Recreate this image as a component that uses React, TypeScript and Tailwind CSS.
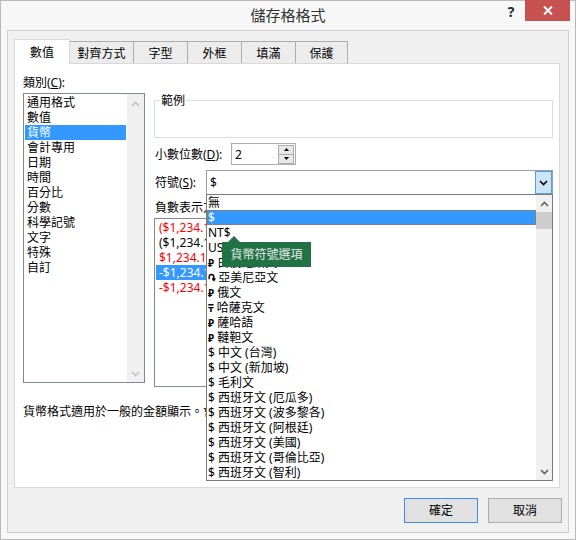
import React from 'react';

const categories = ['通用格式', '數值', '貨幣', '會計專用', '日期', '時間', '百分比', '分數', '科學記號', '文字', '特殊', '自訂'];

const negatives = [
  { text: '($1,234.10)', red: true },
  { text: '($1,234.10)', red: false },
  { text: '$1,234.10', red: true },
  { text: '-$1,234.10', red: false, selected: true },
  { text: '-$1,234.10', red: true },
];

// [symbol, language, symbol drawn small]
const symbols: [string, string, boolean][] = [
  ['', '無', false],
  ['$', '', false],
  ['NT$', '', false],
  ['US$', '', false],
  ['₽', '白俄羅斯文', true],
  ['֏', '亞美尼亞文', true],
  ['₽', '俄文', true],
  ['₸', '哈薩克文', true],
  ['₽', '薩哈語', true],
  ['₽', '韃靼文', true],
  ['$', '中文 (台灣)', false],
  ['$', '中文 (新加坡)', false],
  ['$', '毛利文', false],
  ['$', '西班牙文 (厄瓜多)', false],
  ['$', '西班牙文 (波多黎各)', false],
  ['$', '西班牙文 (阿根廷)', false],
  ['$', '西班牙文 (美國)', false],
  ['$', '西班牙文 (哥倫比亞)', false],
  ['$', '西班牙文 (智利)', false],
];

const tabs = [
  { label: '數值', w: 'w-[56px]' },
  { label: '對齊方式', w: 'w-[65px]' },
  { label: '字型', w: 'w-[55px]' },
  { label: '外框', w: 'w-[55px]' },
  { label: '填滿', w: 'w-[55px]' },
  { label: '保護', w: 'w-[53px]' },
];

function Chevron({ up, className }: { up?: boolean; className?: string }) {
  return (
    <svg width="9" height="6" viewBox="0 0 9 6" className={className}>
      <path d={up ? 'M1 5L4.5 1.5L8 5' : 'M1 1L4.5 4.5L8 1'} fill="none" stroke="currentColor" strokeWidth="1.6" />
    </svg>
  );
}

function Tri({ up }: { up?: boolean }) {
  return (
    <svg width="5" height="3" viewBox="0 0 5 3">
      <path d={up ? 'M0 3L2.5 0L5 3Z' : 'M0 0L2.5 3L5 0Z'} fill="#000" />
    </svg>
  );
}

export default function App() {
  return (
    <div className="w-[576px] h-[540px] bg-[#f7f7f7] border border-[#bababa] flex flex-col text-[12px] leading-[15px] text-black font-[family-name:'Noto_Sans','DejaVu_Sans','Noto_Sans_CJK_TC',sans-serif]">
      {/* Title bar */}
      <div className="h-[29px] grid grid-cols-[1fr_auto_1fr] shrink-0">
        <div />
        <div className="self-center text-[15px] text-[#333] pb-px">儲存格格式</div>
        <div className="flex justify-end items-start">
          <div className="w-[28px] h-[20px] flex items-center justify-center font-bold text-[14px] text-[#2b2b2b]">?</div>
          <div className="w-[45px] h-[21px] -mt-px mr-[5px] bg-[#c75050] flex items-center justify-center">
            <svg width="10" height="9" viewBox="0 0 10 9">
              <path d="M1 0.5L9 8.5M9 0.5L1 8.5" stroke="#fff" strokeWidth="2" />
            </svg>
          </div>
        </div>
      </div>

      {/* Client frame */}
      <div className="mx-[6px] h-[503px] border border-[#cdcdcd] bg-[#f0f0f0] flex flex-col">
        {/* Tabs */}
        <div className="flex items-end pt-[8px] pl-[6px]">
          {tabs.map((t, i) =>
            i === 0 ? (
              <div key={t.label} className={`${t.w} h-[25px] -mb-px relative z-10 bg-white border border-b-0 border-[#d9d9d9] flex items-center justify-center pt-px`}>
                {t.label}
              </div>
            ) : (
              <div key={t.label} className={`${t.w} h-[22px] -ml-px bg-[#ececec] border border-b-0 border-[#acacac] flex items-center justify-center pt-px`}>
                {t.label}
              </div>
            )
          )}
        </div>

        {/* Tab page */}
        <div className="ml-[6px] mr-[8px] h-[425px] bg-white border border-[#d9d9d9] flex flex-col">
          <div className="flex">
            {/* Category */}
            <div className="pl-[8px] pt-[11px] flex flex-col">
              <div className="h-[15px] mb-[3px]">
                類別(<u>C</u>):
              </div>
              <div className="w-[122px] h-[290px] border border-[#828790] flex">
                <div className="flex-1 p-px">
                  {categories.map((c, i) => (
                    <div key={c} className={`h-[15px] pl-[2px] ${i === 2 ? 'bg-[#3399ff] text-white' : ''}`}>
                      {c}
                    </div>
                  ))}
                </div>
                <div className="w-[17px] bg-[#f0f0f0] flex flex-col justify-between text-[#c2c2c2]">
                  <div className="h-[17px] flex items-center justify-center pt-[2px]">
                    <Chevron up />
                  </div>
                  <div className="h-[17px] flex items-center justify-center">
                    <Chevron />
                  </div>
                </div>
              </div>
            </div>

            {/* Right column */}
            <div className="ml-[9px] w-[399px] flex flex-col">
              <div className="relative mt-[36px] h-[38px] border border-[#dcdcdc]">
                <span className="absolute -top-[8px] left-[5px] px-px bg-white">範例</span>
              </div>

              <div className="mt-[5px] flex items-center">
                <div className="w-[77px] pl-px">
                  小數位數(<u>D</u>):
                </div>
                <div className="w-[65px] h-[22px] border border-[#abadb3] flex items-center">
                  <span className="pl-[3px] flex-1">2</span>
                  <div className="w-[16px] mr-px flex flex-col">
                    <div className="h-[10px] border border-[#acacac] bg-[#e8e8e8] flex items-center justify-center">
                      <Tri up />
                    </div>
                    <div className="h-[10px] -mt-px border border-[#acacac] bg-[#e8e8e8] flex items-center justify-center">
                      <Tri />
                    </div>
                  </div>
                </div>
              </div>

              <div className="mt-[5px] flex items-center">
                <div className="w-[52px] pl-px">
                  符號(<u>S</u>):
                </div>
                <div className="relative">
                  <div className="w-[347px] h-[25px] border border-[#a0a0a0] flex items-center">
                    <span className="flex-1 pl-[3px]">$</span>
                    <div className="w-[17px] h-[23px] border border-[#569de5] bg-[#cce4f7] flex items-center justify-center">
                      <Chevron className="text-black" />
                    </div>
                  </div>

                  {/* Symbol drop-down */}
                  <div className="absolute left-0 top-[24px] z-20 w-[347px] h-[287px] bg-white border border-[#7a7a7a] flex">
                    <div className="flex-1">
                      {symbols.map(([sign, name, small], i) => (
                        <div
                          key={i}
                          className={`h-[15px] pl-px whitespace-nowrap ${
                            i === 1 ? 'bg-[#3399ff] text-white outline-dotted outline-1 outline-[#c56a1b] -outline-offset-1' : ''
                          }`}
                        >
                          <span className={small ? 'text-[10px] font-bold' : ''}>{sign}</span>
                          {sign && name ? ' ' : ''}
                          {name}
                        </div>
                      ))}
                    </div>
                    <div className="w-[16px] bg-[#f0f0f0] flex flex-col text-[#606060]">
                      <div className="h-[17px] flex items-center justify-center">
                        <Chevron up />
                      </div>
                      <div className="h-[17px] bg-[#cdcdcd]" />
                      <div className="flex-1" />
                      <div className="h-[17px] flex items-center justify-center">
                        <Chevron />
                      </div>
                    </div>

                    {/* Tooltip */}
                    <div className="absolute left-[15px] top-[47px] w-[89px] h-[25px] bg-[#217346] text-[#e8e8e8] flex items-center justify-center">
                      <svg width="12" height="6" viewBox="0 0 12 6" className="absolute -top-[6px] left-[6px]">
                        <path d="M0 6L6 0L12 6Z" fill="#217346" />
                      </svg>
                      貨幣符號選項
                    </div>
                  </div>
                </div>
              </div>

              <div className="mt-[5px] h-[15px] pl-px whitespace-nowrap">
                負數表示方式(<u>N</u>):
              </div>
              <div className="mt-[3px] h-[169px] border border-[#828790] p-px">
                {negatives.map((n, i) => (
                  <div
                    key={i}
                    className={`h-[15px] pl-[3px] ${
                      n.selected ? 'bg-[#3399ff] text-white' : n.red ? 'text-[#ff0000]' : 'text-black'
                    }`}
                  >
                    {n.text}
                  </div>
                ))}
              </div>
            </div>
          </div>

          <div className="mt-[17px] pl-[8px] whitespace-nowrap">
            貨幣格式適用於一般的金額顯示。會計專用格式則會對齊欄中的小數點。
          </div>
        </div>

        {/* Buttons */}
        <div className="mt-[10px] mr-[6px] flex justify-end gap-[10px]">
          <button className="w-[74px] h-[25px] border border-[#3c8ee6] bg-[#e1e1e1]">確定</button>
          <button className="w-[74px] h-[25px] border border-[#adadad] bg-[#e1e1e1]">取消</button>
        </div>
      </div>
    </div>
  );
}
